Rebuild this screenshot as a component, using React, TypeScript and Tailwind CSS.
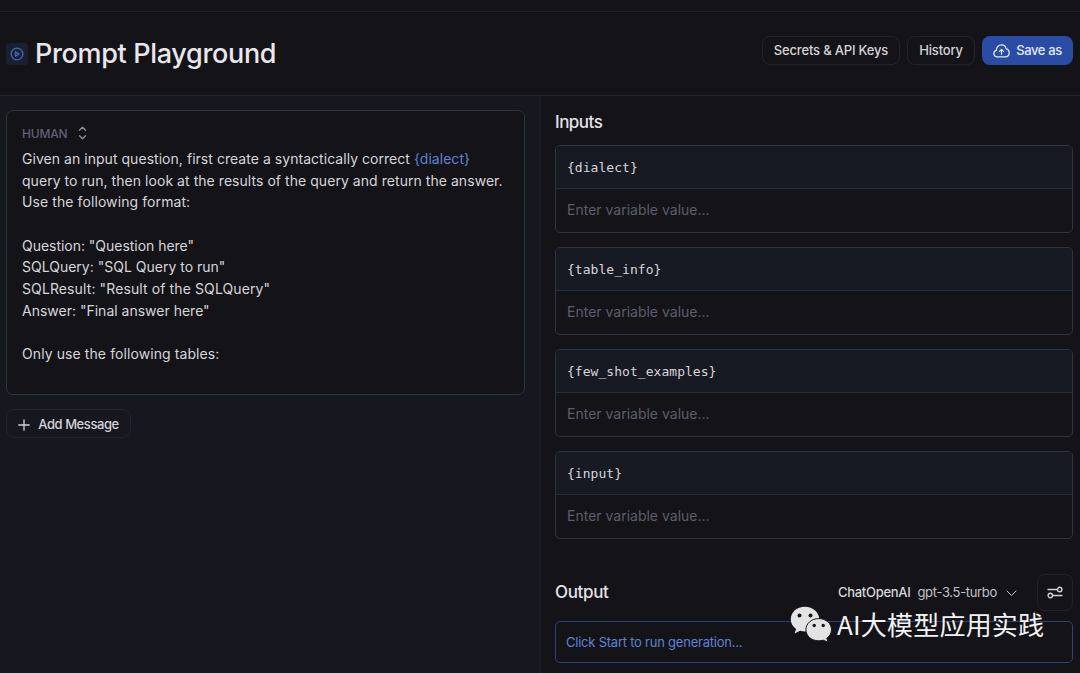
import type { ReactNode } from "react";

const variables = ["{dialect}", "{table_info}", "{few_shot_examples}", "{input}"];

function OutlineButton({ className, children }: { className: string; children: ReactNode }) {
  return (
    <button
      className={`flex h-[29px] shrink-0 items-center justify-center rounded-lg border border-[#24242c] pt-[2px] text-[13px] font-medium whitespace-nowrap text-[#d4d4d8] ${className}`}
    >
      {children}
    </button>
  );
}

function PlayBadge() {
  return (
    <span className="mt-px flex size-[22px] shrink-0 items-center justify-center rounded-[4px] bg-[#1a2030]">
      <svg className="size-[14px]" viewBox="0 0 14 14" fill="none" stroke="#4469b5" strokeWidth="1.3" strokeLinejoin="round">
        <circle cx="7" cy="7" r="5.8" />
        <path d="M5.5 4.9v4.2L9.2 7z" />
      </svg>
    </span>
  );
}

function CloudUpload() {
  return (
    <svg className="h-[14px] w-[17px]" viewBox="0 0 17 14" fill="none" stroke="currentColor" strokeWidth="1.2" strokeLinecap="round" strokeLinejoin="round">
      <path d="M3.8 12.9A3.3 3.3 0 0 1 3.4 6.4C3.2 3.3 5.6 .9 8.5 .9c2.500 0 4.200 1.500 4.700 3.900 1.800.400 3 1.900 3 3.900 0 2.400-1.700 4.200-4 4.200z" />
      <path d="M8.5 10.2V5.6M6.5 7.400l2-2 2 2" />
    </svg>
  );
}

function VariableCard({ name }: { name: string }) {
  return (
    <div className="flex h-[88px] flex-col overflow-hidden rounded-[5px] border border-[#2b3344]">
      <div className="flex h-[43px] items-center border-b border-[#262d3c] bg-[#171a23] px-[11px] pt-px font-['DejaVu_Sans_Mono',monospace] text-[13px] tracking-[0.04px] text-[#d6d6da]">
        {name}
      </div>
      <div className="flex flex-1 items-center px-[11px] pb-[2px] text-[14px] text-[#5d5e6b]">Enter variable value...</div>
    </div>
  );
}

function WeChatMark() {
  return (
    <svg className="h-[36px] w-[42px]" viewBox="0 0 42 36">
      <path fill="#e3e3e3" d="M15 0.8C6.9.8.8 6.3.8 13.2c0 4 2 7.400 5.300 9.700l-1.500 4.600 5.500-2.800c1.600.500 3.200.700 4.900.700 8 0 14.300-5.500 14.300-12.200S23 .8 15 .8z" />
      <path fill="#e3e3e3" stroke="#141318" strokeWidth="1" d="M28.7 12.6c-7.200 0-12.800 4.900-12.800 11.100s5.600 11.100 12.800 11.100c1.600 0 3-.200 4.400-.600l5 2-1.300-4c2.900-2 4.700-5 4.700-8.500 0-6.200-5.600-11.100-12.800-11.100z" />
      <circle cx="9.5" cy="9.5" r="2" fill="#141318" />
      <circle cx="20.5" cy="9.5" r="2" fill="#141318" />
      <circle cx="24.2" cy="19.5" r="1.7" fill="#141318" />
      <circle cx="33.2" cy="19.5" r="1.7" fill="#141318" />
    </svg>
  );
}

export default function App() {
  return (
    <div className="relative flex h-[673px] w-[1080px] flex-col overflow-hidden bg-[#141318] font-[Inter,'Noto_Sans_CJK_SC',sans-serif] text-[#e2e2e6]">
      <div className="h-3 shrink-0 border-b border-[#1e2430]" />
      <header className="flex h-[84px] shrink-0 items-center justify-between border-b border-[#1e2430] pr-[7px] pl-1.5">
        <div className="flex items-center gap-[7px]">
          <PlayBadge />
          <h1 className="text-[27px] leading-8 font-[550] tracking-[-0.33px] whitespace-nowrap text-[#e8e8ec]">Prompt Playground</h1>
        </div>
        <div className="mb-[7px] flex items-center gap-[7px]">
          <OutlineButton className="w-[138px] tracking-[-0.18px]">Secrets &amp; API Keys</OutlineButton>
          <OutlineButton className="w-[68px] tracking-[-0.18px]">History</OutlineButton>
          <button className="flex h-[29px] w-[91px] items-center justify-center gap-1.5 rounded-lg bg-[#2a4ca4] pt-px text-[13px] font-medium tracking-[-0.4px] whitespace-nowrap text-[#e4e8f4]">
            <CloudUpload />
            Save as
          </button>
        </div>
      </header>
      <main className="flex min-h-0 flex-1">
        <section className="flex w-[541px] shrink-0 flex-col items-start border-r-2 border-[#1c1d27] bg-[#171720] pt-[14px] pl-1.5">
          <div className="h-[285px] w-[519px] rounded-[7px] border border-[#2b3344] bg-[#141318] px-[15px] pt-[14px]">
            <div className="flex h-4 items-center gap-[10px] font-medium text-[#625f78]">
              <span className="w-[46px] pt-px text-[12px] tracking-[-0.2px]">HUMAN</span>
              <svg className="h-[14px] w-[9px] text-[#92929e]" viewBox="0 0 9 14" fill="none" stroke="currentColor" strokeWidth="1.3" strokeLinecap="round" strokeLinejoin="round">
                <path d="M1.5 4.2l3-3 3 3M1.5 9.8l3 3 3-3" />
              </svg>
            </div>
            <div className="mt-[7px] text-[14px] leading-[21.65px] tracking-[0.04px] whitespace-pre text-[#d6d6da]">
              <p>Given an input question, first create a syntactically correct <span className="text-[#5b83d6]">{"{dialect}"}</span></p>
              <p className="tracking-[0.05px]">query to run, then look at the results of the query and return the answer.</p>
              <p className="tracking-[0.09px]">Use the following format:</p>
              <br />
              <p className="tracking-[-0.03px]">Question: "Question here"</p>
              <p className="tracking-[0px]">SQLQuery: "SQL Query to run"</p>
              <p className="tracking-[0.11px]">SQLResult: "Result of the SQLQuery"</p>
              <p className="tracking-[0px]">Answer: "Final answer here"</p>
              <br />
              <p className="tracking-[0.09px]">Only use the following tables:</p>
            </div>
          </div>
          <OutlineButton className="mt-[14px] w-[125px] gap-2 tracking-[-0.42px]">
            <svg className="size-3" viewBox="0 0 12 12" fill="none" stroke="currentColor" strokeWidth="1.3" strokeLinecap="round">
              <path d="M6 .8v10.400M.8 6h10.400" />
            </svg>
            Add Message
          </OutlineButton>
        </section>
        <section className="flex flex-1 flex-col pr-[7px] pl-[14px]">
          <h2 className="mt-[15px] h-[22px] text-[17px] leading-[23px] font-[550] tracking-[-0.5px]">Inputs</h2>
          <div className="mt-3 flex flex-col gap-[14px]">
            {variables.map((name) => (
              <VariableCard key={name} name={name} />
            ))}
          </div>
          <div className="mt-[35px] flex h-[37px] shrink-0 items-center">
            <h2 className="pb-px text-[17px] leading-[22px] font-[550] tracking-[-0.35px]">Output</h2>
            <div className="ml-auto flex items-center pt-px text-[13px] whitespace-nowrap">
              <span className="font-medium tracking-[-0.3px] text-[#d8d8dc]">ChatOpenAI</span>
              <span className="ml-[7px] tracking-[-0.32px] text-[#c2c2c8]">gpt-3.5-turbo</span>
              <svg className="ml-[9px] h-[7px] w-[11px] text-[#c2c2c8]" viewBox="0 0 11 7" fill="none" stroke="currentColor" strokeLinecap="round" strokeLinejoin="round">
                <path d="M1 1l4.500 4.500L10 1" />
              </svg>
            </div>
            <button className="ml-5 flex h-[37px] w-[36px] items-center justify-center rounded-lg border border-[#222229]">
              <svg className="h-[13px] w-4 text-[#d0d0d4]" viewBox="0 0 16 13" fill="none" stroke="currentColor" strokeWidth="1.4" strokeLinecap="round">
                <path d="M1 3.500h9M6 9.500h9" />
                <circle cx="12.7" cy="3.5" r="2.2" />
                <circle cx="3.3" cy="9.5" r="2.2" />
              </svg>
            </button>
          </div>
          <div className="mt-[10px] flex h-[42px] shrink-0 items-center rounded-[5px] border border-[#2c4373] px-[10px] pt-[2px] text-[13px] tracking-[-0.23px] text-[#5b83d6]">
            Click Start to run generation...
          </div>
        </section>
      </main>
      <div className="absolute top-[606px] left-[790px] flex items-center gap-[5px]">
        <WeChatMark />
        <span className="font-['Noto_Sans_CJK_SC',sans-serif] text-[26px] leading-9 tracking-[0.2px] whitespace-nowrap text-[#f2f2f2]">AI大模型应用实践</span>
      </div>
    </div>
  );
}
